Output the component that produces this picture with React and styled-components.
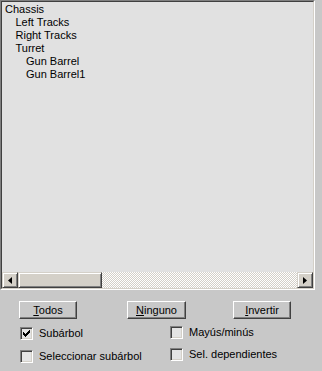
import React from "react";
import styled, { createGlobalStyle } from "styled-components";

const Global = createGlobalStyle`
  html, body { margin: 0; padding: 0; background: #c8c8c8; }
  body { font-family: "Liberation Sans", Arial, sans-serif; font-size: 11px; color: #000; }
  * { box-sizing: border-box; }
`;

const Page = styled.div`
  width: 322px;
  height: 371px;
  background: #c8c8c8;
  display: flex;
  flex-direction: column;
`;

const FrameOuter = styled.div`
  width: 315px;
  height: 291px;
  border-style: solid;
  border-width: 1px;
  border-color: #808080 #ffffff #ffffff #808080;
`;

const FrameInner = styled.div`
  height: 100%;
  border-style: solid;
  border-width: 1px;
  border-color: #404040 #d4d0c8 #d4d0c8 #404040;
  display: flex;
  flex-direction: column;
  background: #e1e1e1;
`;

const List = styled.div`
  flex: 1;
  padding-top: 1px;
  overflow: hidden;
`;

const Item = styled.div`
  height: 13px;
  line-height: 13px;
  white-space: nowrap;
  padding-left: ${(p) => 3 + p.$level * 10.5}px;
`;

const HScroll = styled.div`
  height: 16px;
  display: flex;
  background: repeating-conic-gradient(#d4d0c8 0 25%, #ffffff 0 50%) 0 0 / 2px 2px;
`;

const Raised = styled.div`
  height: 16px;
  width: ${(p) => p.$w}px;
  background: #d4d0c8;
  border-style: solid;
  border-width: 1px;
  border-color: #d4d0c8 #404040 #404040 #d4d0c8;
  box-shadow: inset 1px 1px #ffffff, inset -1px -1px #808080;
  display: flex;
  align-items: center;
  justify-content: center;
  flex-shrink: 0;
`;

const Track = styled.div`
  flex: 1;
`;

const Bottom = styled.div`
  display: flex;
  flex-direction: column;
  padding-top: 11px;
`;

const ButtonRow = styled.div`
  display: flex;
  padding-left: 19px;
  height: 18px;
`;

const Button = styled.div`
  width: ${(p) => p.$w}px;
  margin-left: ${(p) => p.$ml || 0}px;
  height: 18px;
  border-style: solid;
  border-width: 1px;
  border-color: #ffffff #404040 #404040 #ffffff;
  box-shadow: inset -1px -1px #808080;
  background: #c8c8c8;
  display: flex;
  align-items: center;
  justify-content: center;
  line-height: 13px;
  & u { text-decoration: underline; text-underline-offset: 1px; }
`;

const Checks = styled.div`
  display: grid;
  grid-template-columns: 150px auto;
  grid-auto-rows: 22px;
  padding-left: 20px;
  padding-top: 8px;
`;

const CheckItem = styled.div`
  display: flex;
  align-items: flex-start;
  gap: 6px;
  margin-top: ${(p) => p.$mt || 0}px;
`;

const Box = styled.div`
  width: 13px;
  height: 13px;
  border-style: solid;
  border-width: 1px;
  border-color: #808080 #ffffff #ffffff #808080;
  box-shadow: inset 1px 1px #404040, inset -1px -1px #d4d0c8;
  background: #e4e4e4;
  display: flex;
  align-items: center;
  justify-content: center;
  flex-shrink: 0;
`;

const Label = styled.span`
  line-height: 13px;
  white-space: nowrap;
`;

const LeftArrow = () => (
  <svg width="4" height="7" viewBox="0 0 4 7">
    <polygon points="4,0 4,7 0,3.5" fill="#000" />
  </svg>
);
const RightArrow = () => (
  <svg width="4" height="7" viewBox="0 0 4 7">
    <polygon points="0,0 0,7 4,3.5" fill="#000" />
  </svg>
);
const Tick = () => (
  <svg width="7" height="7" viewBox="0 0 7 7" shapeRendering="crispEdges">
    <path d="M0 2 L2 4 L6 0 L7 0 L7 2 L2 7 L0 5 Z" fill="#000" />
  </svg>
);

const items = [
  ["Chassis", 0],
  ["Left Tracks", 1],
  ["Right Tracks", 1],
  ["Turret", 1],
  ["Gun Barrel", 2],
  ["Gun Barrel1", 2],
];

const Check = ({ checked, label, mt }) => (
  <CheckItem $mt={mt}>
    <Box>{checked && <Tick />}</Box>
    <Label>{label}</Label>
  </CheckItem>
);

export default function App() {
  return (
    <Page>
      <Global />
      <FrameOuter>
        <FrameInner>
          <List>
            {items.map(([t, l]) => (
              <Item key={t} $level={l}>{t}</Item>
            ))}
          </List>
          <HScroll>
            <Raised $w={16}><LeftArrow /></Raised>
            <Raised $w={84} />
            <Track />
            <Raised $w={16}><RightArrow /></Raised>
          </HScroll>
        </FrameInner>
      </FrameOuter>
      <Bottom>
        <ButtonRow>
          <Button $w={58}><span><u>T</u>odos</span></Button>
          <Button $w={59} $ml={50}><span><u>N</u>inguno</span></Button>
          <Button $w={58} $ml={47}><span><u>I</u>nvertir</span></Button>
        </ButtonRow>
        <Checks>
          <Check checked label="Subárbol" />
          <Check label="Mayús/minús" mt={-1} />
          <Check label="Seleccionar subárbol" mt={1} />
          <Check label="Sel. dependientes" mt={-1} />
        </Checks>
      </Bottom>
    </Page>
  );
}
